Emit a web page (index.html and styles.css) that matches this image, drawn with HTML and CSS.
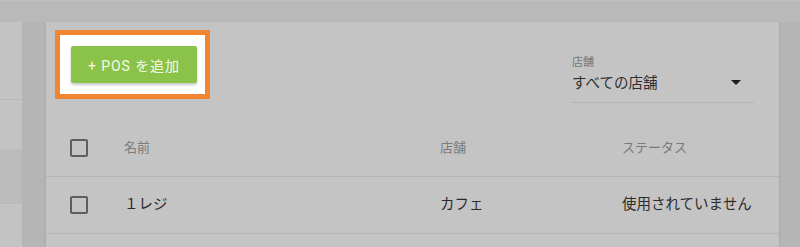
FILE: index.html
```html
<!DOCTYPE html>
<html lang="ja">
<head>
<meta charset="utf-8">
<link rel="stylesheet" href="styles.css">
</head>
<body>
<div class="topbar"></div>
<div class="main">
  <aside class="side">
    <div class="side-item s1"></div>
    <div class="side-item s2"></div>
    <div class="side-item s3"></div>
    <div class="side-item s4"></div>
  </aside>
  <section class="card">
    <div class="toolbar">
      <div class="highlight">
        <button class="add-btn">+ POS を追加</button>
      </div>
      <div class="select">
        <div class="select-label">店舗</div>
        <div class="select-value">
          <span>すべての店舗</span>
          <span class="caret"></span>
        </div>
      </div>
    </div>
    <div class="table">
      <div class="row head">
        <div class="cell check"><span class="box"></span></div>
        <div class="cell text">名前</div>
        <div class="cell text">店舗</div>
        <div class="cell text">ステータス</div>
      </div>
      <div class="row">
        <div class="cell check"><span class="box"></span></div>
        <div class="cell text">１レジ</div>
        <div class="cell text">カフェ</div>
        <div class="cell text">使用されていません</div>
      </div>
      <div class="row last"></div>
    </div>
  </section>
</div>
</body>
</html>
```
FILE: styles.css
```css
* { box-sizing: border-box; }
html, body { margin: 0; padding: 0; }
body {
  width: 800px;
  height: 247px;
  overflow: hidden;
  background: #b5b5b5;
  font-family: Roboto, "Noto Sans CJK JP", sans-serif;
  color: #2b2b2b;
}
.topbar {
  height: 22px;
  background: #b9b9b9;
  border-top: 1px solid #c0c0c0;
}
.main {
  display: flex;
  height: 225px;
}
.side {
  width: 22px;
  background: #c3c3c3;
  display: flex;
  flex-direction: column;
}
.side-item { border-bottom: 1px solid #b8b8b8; flex-shrink: 0; }
.s1 { height: 78px; }
.s2 { height: 51px; }
.s3 { height: 53px; background: #bcbcbc; }
.s4 { flex: 1; border-bottom: none; }
.card {
  margin-left: 24px;
  width: 733px;
  background: #c4c4c4;
  box-shadow: 0 1px 3px rgba(0,0,0,0.12);
  display: flex;
  flex-direction: column;
  overflow: hidden;
}
.toolbar {
  height: 97px;
  flex-shrink: 0;
  display: flex;
  justify-content: space-between;
  align-items: flex-start;
}
.highlight {
  margin: 8px 0 0 9px;
  width: 155px;
  height: 69px;
  border: 5px solid #f28532;
  background: #ffffff;
  padding: 11px 0 0 11px;
}
.add-btn {
  width: 126px;
  height: 37px;
  border: none;
  border-radius: 2px;
  background: #8bc34a;
  color: #f4fbe9;
  font-family: Roboto, "Noto Sans CJK JP", sans-serif;
  font-size: 14px;
  letter-spacing: 0.9px;
  padding: 0;
  box-shadow: 0 2px 3px rgba(0,0,0,0.22);
}
.select {
  margin: 33px 25px 0 0;
  width: 182px;
  border-bottom: 1px solid #b4b4b4;
  height: 48px;
}
.select-label {
  font-family: "Noto Sans CJK JP", sans-serif;
  font-size: 11px;
  line-height: 12px;
  color: #777;
}
.select-value {
  display: flex;
  justify-content: space-between;
  align-items: center;
  margin-top: 5px;
  font-family: "Noto Sans CJK JP", sans-serif;
  font-size: 14.5px;
  line-height: 20px;
  color: #2f2f2f;
}
.caret {
  width: 0;
  height: 0;
  margin-right: 13px;
  border-left: 5px solid transparent;
  border-right: 5px solid transparent;
  border-top: 5px solid #1e1e1e;
}
.table { display: flex; flex-direction: column; flex-shrink: 0; }
.row {
  display: grid;
  grid-template-columns: 78px 316px 182px 1fr;
  align-items: center;
  height: 57px;
  flex-shrink: 0;
  border-bottom: 1px solid #b6b6b6;
  font-family: "Noto Sans CJK JP", sans-serif;
  font-size: 14.5px;
  color: #2b2b2b;
}
.row .text { padding-bottom: 5px; }
.row.head {
  font-size: 13px;
  color: #7a7a7a;
  height: 58px;
  padding-top: 1px;
}
.row.head .text { padding-bottom: 4px; }
.row.last { border-bottom: none; }
.check { padding-left: 24px; display: flex; }
.box {
  width: 18px;
  height: 18px;
  border: 2px solid #5e5e5e;
  border-radius: 2px;
}
```
